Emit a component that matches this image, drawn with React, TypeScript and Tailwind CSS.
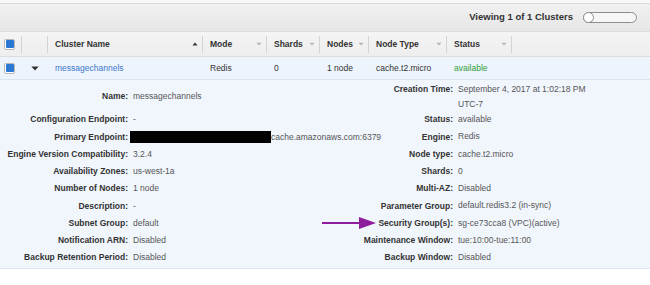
import React from "react";

const cols = [22, 26, 155, 64, 53, 49, 78, 65];

function Checkbox() {
  return (
    <div className="w-[11px] h-[11px] rounded-[2px] border border-[#b9b9b9] bg-white flex items-center justify-center">
      <div className="w-[8px] h-[8px] rounded-[1px] bg-[#2a78d3]" />
    </div>
  );
}

function Down() {
  return (
    <svg width="6" height="4" viewBox="0 0 6 4">
      <path d="M0.5 0.8 L5.5 0.8 L3 3.4 Z" fill="#b3b3b3" />
    </svg>
  );
}

function Up() {
  return (
    <svg width="6" height="4" viewBox="0 0 6 4">
      <path d="M0.5 3.4 L5.5 3.4 L3 0.6 Z" fill="#333" />
    </svg>
  );
}

function Sep() {
  return <div className="w-px h-[17px] bg-[#d3d3d3] shrink-0" />;
}

type Row = {
  l: string;
  lv: React.ReactNode;
  r: string;
  rv: React.ReactNode;
  arrow?: boolean;
  top?: boolean;
};

const rows: Row[] = [
  {
    l: "Name:",
    lv: "messagechannels",
    r: "Creation Time:",
    rv: <div className="w-[140px]">September 4, 2017 at 1:02:18 PM UTC-7</div>,
    top: true,
  },
  { l: "Configuration Endpoint:", lv: "-", r: "Status:", rv: "available" },
  {
    l: "Primary Endpoint:",
    lv: (
      <div className="flex items-center ml-[-3px]">
        <div className="w-[141px] h-[12px] bg-black" />
        <span>cache.amazonaws.com:6379</span>
      </div>
    ),
    r: "Engine:",
    rv: "Redis",
  },
  { l: "Engine Version Compatibility:", lv: "3.2.4", r: "Node type:", rv: "cache.t2.micro" },
  { l: "Availability Zones:", lv: "us-west-1a", r: "Shards:", rv: "0" },
  { l: "Number of Nodes:", lv: "1 node", r: "Multi-AZ:", rv: "Disabled" },
  { l: "Description:", lv: "-", r: "Parameter Group:", rv: "default.redis3.2 (in-sync)" },
  { l: "Subnet Group:", lv: "default", r: "Security Group(s):", rv: "sg-ce73cca8 (VPC)(active)", arrow: true },
  { l: "Notification ARN:", lv: "Disabled", r: "Maintenance Window:", rv: "tue:10:00-tue:11:00" },
  { l: "Backup Retention Period:", lv: "Disabled", r: "Backup Window:", rv: "Disabled" },
];

export default function App() {
  const headers: { t: string; icon: React.ReactNode }[] = [
    { t: "Cluster Name", icon: <Up /> },
    { t: "Mode", icon: <Down /> },
    { t: "Shards", icon: <Down /> },
    { t: "Nodes", icon: <Down /> },
    { t: "Node Type", icon: <Down /> },
    { t: "Status", icon: <Down /> },
  ];
  const data: React.ReactNode[] = [
    <span className="text-[#3c78cd]">messagechannels</span>,
    "Redis",
    "0",
    "1 node",
    "cache.t2.micro",
    <span className="text-[#2f9e3a]">available</span>,
  ];
  return (
    <div className="w-[650px] h-[285px] overflow-hidden bg-white font-['Liberation_Sans',Arial,Helvetica,sans-serif] text-[8.5px] text-[#333]">
      <div className="h-[4px] bg-[#f8f8f8] border-b border-[#dadada]" />
      <div className="h-[27px] bg-gradient-to-b from-[#f1f1f1] to-[#e6e6e6] flex items-center justify-end pr-[13px]">
        <span className="font-bold text-[9.5px] text-[#333]">Viewing 1 of 1 Clusters</span>
        <div className="relative ml-[10px] w-[54px] h-[11px] rounded-full border border-[#8c8c8c] bg-[#f6f6f6]">
          <div className="absolute left-[-1px] top-[-1px] w-[11px] h-[11px] rounded-full border border-[#8c8c8c] bg-white" />
        </div>
      </div>
      <div className="h-[26px] bg-gradient-to-b from-[#f4f4f4] to-[#eeeeee] border-y border-[#dcdcdc] flex items-center font-bold">
        <div style={{ width: cols[0] }} className="h-full flex items-center shrink-0">
          <div className="flex-1 pl-[4px]">
            <Checkbox />
          </div>
          <Sep />
        </div>
        <div style={{ width: cols[1] }} className="h-full flex items-center justify-end shrink-0">
          <Sep />
        </div>
        {headers.map((h, i) => (
          <div key={h.t} style={{ width: cols[i + 2] }} className="h-full flex items-center shrink-0">
            <div className="flex-1 flex items-center justify-between pl-[7px] pr-[4px]">
              <span>{h.t}</span>
              {h.icon}
            </div>
            <Sep />
          </div>
        ))}
      </div>
      <div className="h-[23px] bg-[#edf4fc] border-b border-[#dbe3ec] flex items-center">
        <div style={{ width: cols[0] }} className="pl-[4px] shrink-0">
          <Checkbox />
        </div>
        <div style={{ width: cols[1] }} className="flex justify-center shrink-0">
          <svg width="8" height="5" viewBox="0 0 8 5">
            <path d="M0.3 0.5 L7.7 0.5 L4 4.6 Z" fill="#333" />
          </svg>
        </div>
        {data.map((d, i) => (
          <div key={i} style={{ width: cols[i + 2] }} className="pl-[7px] shrink-0 whitespace-nowrap">
            {d}
          </div>
        ))}
      </div>
      <div className="bg-[#f1f6fd] border-b border-[#dde5ee] pt-[2px] pb-[2px] grid grid-cols-[128px_198px_127px_1fr] grid-rows-[29px_repeat(9,17.25px)]">
        {rows.map((r) => (
          <React.Fragment key={r.l}>
            <div className="flex items-center justify-end font-bold text-[#333] whitespace-nowrap">{r.l}</div>
            <div className="flex items-center pl-[5px] text-[#555] whitespace-nowrap">{r.lv}</div>
            <div
              className={
                r.top
                  ? "relative flex items-start justify-end font-bold text-[#333] whitespace-nowrap leading-[15px]"
                  : "relative flex items-center justify-end font-bold text-[#333] whitespace-nowrap"
              }
            >
              {r.arrow && (
                <svg className="absolute left-[-4px] top-1/2 -translate-y-1/2" width="56" height="14" viewBox="0 0 56 14">
                  <path d="M0 7 L40 7" stroke="#8d1d9d" strokeWidth="2.2" />
                  <path d="M37 1 L54 7 L37 13 Z" fill="#8d1d9d" />
                </svg>
              )}
              {r.r}
            </div>
            <div
              className={
                r.top
                  ? "flex items-start pl-[5px] text-[#555] leading-[15px]"
                  : "flex items-center pl-[5px] text-[#555] leading-[15px]"
              }
            >
              {r.rv}
            </div>
          </React.Fragment>
        ))}
      </div>
    </div>
  );
}
